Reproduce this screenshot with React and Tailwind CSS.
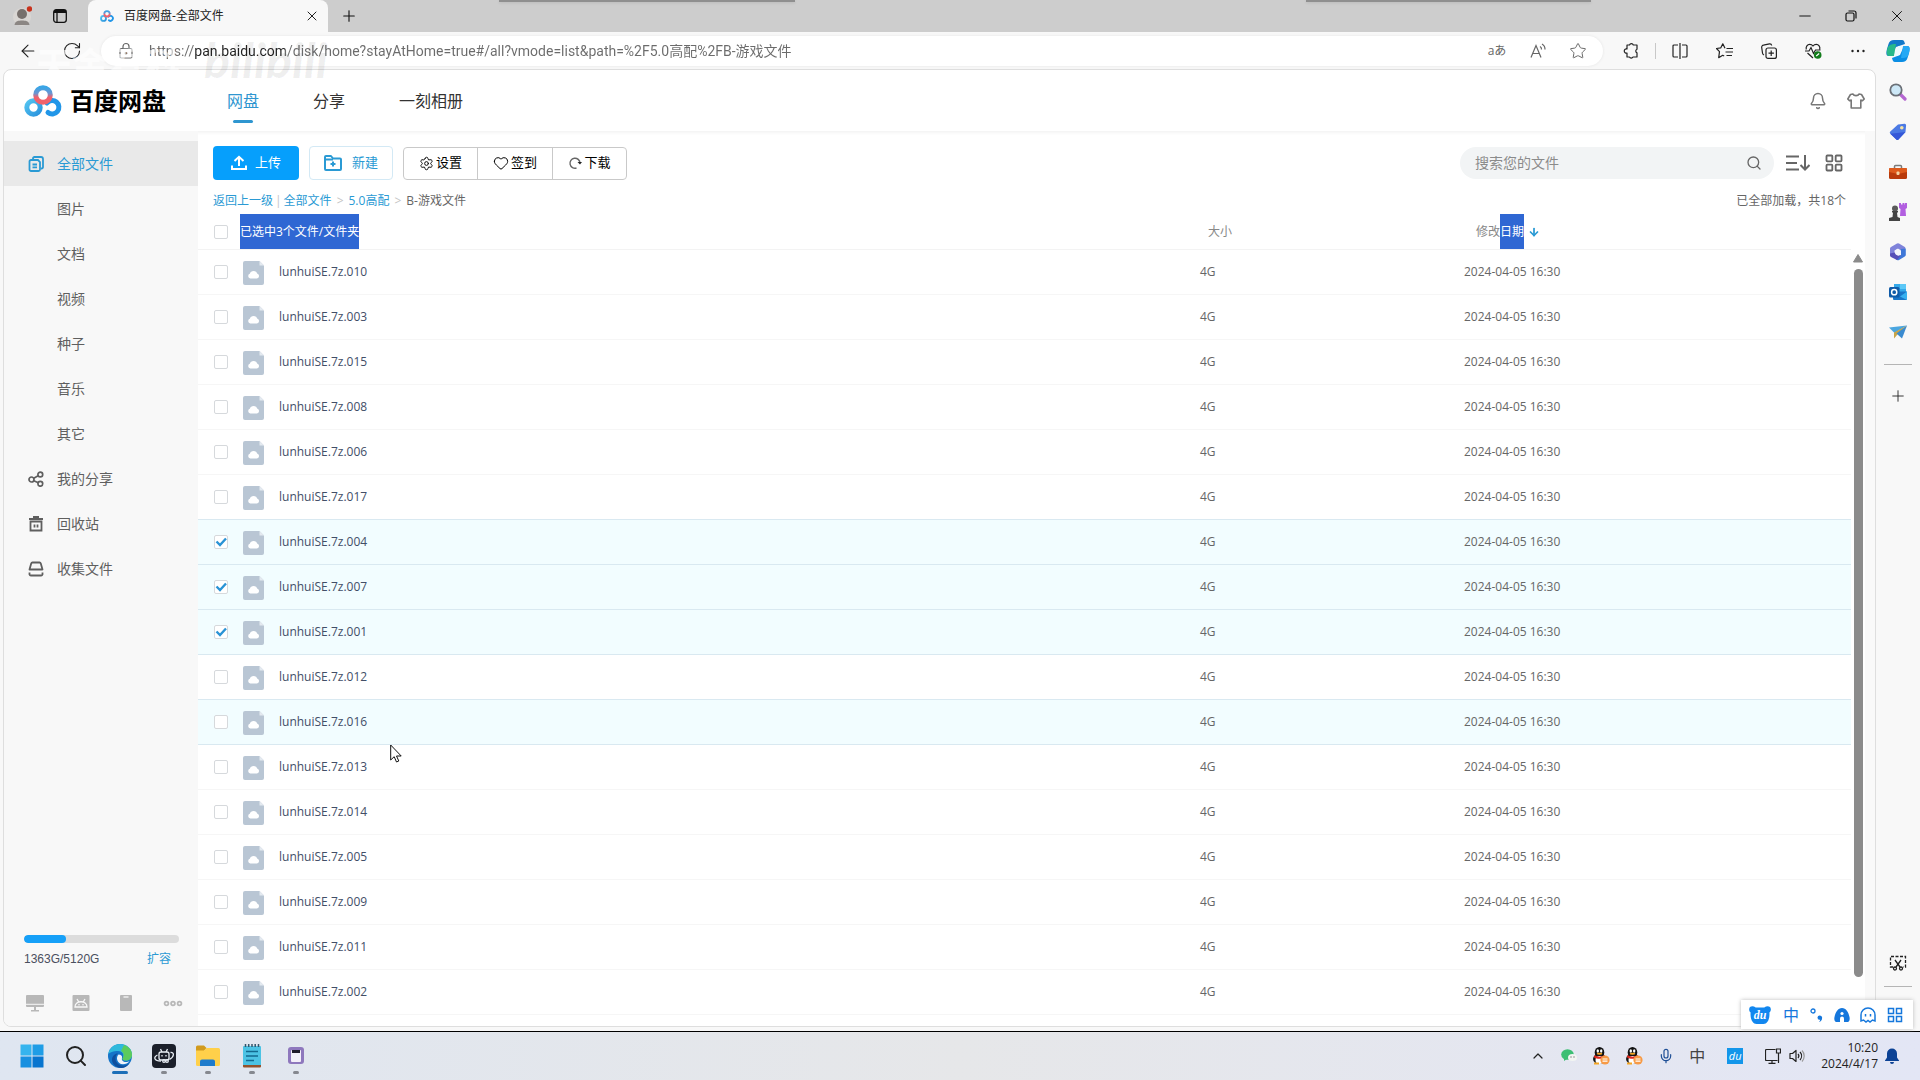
import {
  ArrowLeft,
  ArrowDown,
  BellIcon,
  ChevronUp,
  Heart,
  LayoutGrid,
  Mic,
  Minus,
  Plus,
  RotateCw,
  Search,
  Settings,
  Star,
  X,
} from "lucide-react";

const files = [
  { name: "lunhuiSE.7z.010" },
  { name: "lunhuiSE.7z.003" },
  { name: "lunhuiSE.7z.015" },
  { name: "lunhuiSE.7z.008" },
  { name: "lunhuiSE.7z.006" },
  { name: "lunhuiSE.7z.017" },
  { name: "lunhuiSE.7z.004", checked: true },
  { name: "lunhuiSE.7z.007", checked: true },
  { name: "lunhuiSE.7z.001", checked: true },
  { name: "lunhuiSE.7z.012" },
  { name: "lunhuiSE.7z.016", hovered: true },
  { name: "lunhuiSE.7z.013" },
  { name: "lunhuiSE.7z.014" },
  { name: "lunhuiSE.7z.005" },
  { name: "lunhuiSE.7z.009" },
  { name: "lunhuiSE.7z.011" },
  { name: "lunhuiSE.7z.002" },
];

const isActive = (file) => Boolean(file && (file.checked || file.hovered));

/* ---------- Icons ---------- */

function CloudLogo({ className }) {
  return (
    <svg className={className} viewBox="0 0 38 32" fill="none">
      <defs>
        <linearGradient id="ring" x1="0" y1="0" x2="0" y2="1">
          <stop offset="0" stopColor="#3aa5e6" />
          <stop offset="0.4" stopColor="#6f93cf" />
          <stop offset="0.65" stopColor="#f0616c" />
        </linearGradient>
        <linearGradient id="left" x1="0" y1="0" x2="1" y2="1">
          <stop offset="0" stopColor="#52c3f0" />
          <stop offset="1" stopColor="#2a93dd" />
        </linearGradient>
      </defs>
      <circle cx="9.5" cy="22.5" r="6.7" stroke="url(#left)" strokeWidth="5" />
      <path d="M23 18a6.700 6.700 0 1 1 1 9.500" stroke="#2196e8" strokeWidth="5" strokeLinecap="round" />
      <circle cx="19" cy="10" r="7.300" stroke="url(#ring)" strokeWidth="5" />
    </svg>
  );
}

function FilesIcon() {
  return (
    <svg className="size-4" viewBox="0 0 16 16" fill="none" stroke="currentColor" strokeWidth="1.800">
      <path d="M5 3V2.500A1.500 1.500 0 0 1 6.500 1H13a2 2 0 0 1 2 2v8a1.500 1.500 0 0 1-1.500 1.500H13" />
      <path d="M3 4h7l2 2v7.500a1.500 1.500 0 0 1-1.500 1.500H3a1.500 1.500 0 0 1-1.500-1.500v-8A1.500 1.500 0 0 1 3 4Z" />
      <path d="M4.500 8.500H9M4.500 11.300H9" />
    </svg>
  );
}

function ShareIcon() {
  return (
    <svg className="size-4" viewBox="0 0 16 16" fill="none" stroke="currentColor" strokeWidth="1.700">
      <circle cx="3.500" cy="8.500" r="2.500" />
      <circle cx="12.300" cy="3.500" r="2.400" />
      <circle cx="12.300" cy="12.800" r="2.400" />
      <path d="M5.700 7.200 10.200 4.700M5.800 9.700l4.500 2.100" />
    </svg>
  );
}

function TrashIcon() {
  return (
    <svg className="size-4" viewBox="0 0 16 16" fill="none" stroke="currentColor" strokeWidth="1.800">
      <path d="M1 3h14M5 1h6M2.500 5.500h11v9h-11zM6.500 8.500v3M9.500 8.500v3" />
    </svg>
  );
}

function CollectIcon() {
  return (
    <svg className="size-4" viewBox="0 0 16 16" fill="none" stroke="currentColor" strokeWidth="1.800" strokeLinejoin="round">
      <path d="M1.500 8.500 3.200 2.500a1.500 1.500 0 0 1 1.300-1h7a1.500 1.500 0 0 1 1.300 1l1.700 6zM1.500 11.500v2a1.500 1.500 0 0 0 1.500 1h10a1.500 1.500 0 0 0 1.500-1v-2" />
    </svg>
  );
}

function UploadIcon() {
  return (
    <svg className="size-4" viewBox="0 0 16 16" fill="none" stroke="currentColor" strokeWidth="2">
      <path d="M8 11V2.500M3.500 6 8 1.800 12.500 6M1 10.500V14h14v-3.500" />
    </svg>
  );
}

function NewFolderIcon() {
  return (
    <svg className="h-4 w-[18px]" viewBox="0 0 18 16" fill="none" stroke="currentColor" strokeWidth="2" strokeLinejoin="round">
      <path d="M1 14V2a1 1 0 0 1 1-1h5l2 2.500h7a1 1 0 0 1 1 1V14a1 1 0 0 1-1 1H2a1 1 0 0 1-1-1Z" />
      <path d="M1 4.500h8M9 6.500v5M6.500 9h5" />
    </svg>
  );
}

function ShirtIcon() {
  return (
    <svg className="size-[18px]" viewBox="0 0 18 18" fill="none" stroke="currentColor" strokeWidth="1.600" strokeLinejoin="round">
      <path d="M6 2c.8 2.200 5.200 2.200 6 0l2.500.5L17.200 7l-1.700 1.800-1.700-.8V16H4.200V8l-1.700.8L.8 7l2.700-4.500Z" />
    </svg>
  );
}

function FileIcon() {
  return (
    <svg className="h-6 w-[21px] shrink-0" viewBox="0 0 21 24">
      <path d="M2 0h14.500L21 4.500V22a2 2 0 0 1-2 2H2a2 2 0 0 1-2-2V2a2 2 0 0 1 2-2Z" fill="#b9c6d4" />
      <path d="M16.500 0 21 4.500h-4.500Z" fill="#e4eaf0" />
      <path d="M7.300 17.500a2.500 2.500 0 0 1-.5-4.800 4 4 0 0 1 7.600 0 2.500 2.500 0 0 1-.4 4.800Z" fill="#fff" />
    </svg>
  );
}

function SortIcon() {
  return (
    <svg className="h-4 w-6" viewBox="0 0 24 16" fill="none" stroke="currentColor" strokeWidth="2">
      <path d="M0 1.500h13M0 8h11M0 14.500h13M19 0v14M14.500 10 19 14.500 23.500 10" />
    </svg>
  );
}

function PuzzleIcon() {
  return (
    <svg className="size-4" viewBox="0 0 16 16" fill="none" stroke="currentColor" strokeWidth="1.200" strokeLinejoin="round">
      <path d="M4 2h2.500a2 2 0 0 1 3.800 0H14v4.200a2 2 0 0 0 0 3.700V14h-4a2 2 0 0 1-3.600 0H4v-4a2.100 2.100 0 1 1 0-4Z" />
    </svg>
  );
}

function SplitIcon() {
  return (
    <svg className="size-4" viewBox="0 0 16 16" fill="none" stroke="currentColor" strokeWidth="1.200">
      <path d="M6 2H2a1 1 0 0 0-1 1v10a1 1 0 0 0 1 1h4M10 2h4a1 1 0 0 1 1 1v10a1 1 0 0 1-1 1h-4M8 0v16" />
    </svg>
  );
}

function FavoritesIcon() {
  return (
    <svg className="h-4 w-[17px]" viewBox="0 0 17 16" fill="none" stroke="currentColor" strokeWidth="1.200" strokeLinejoin="round">
      <path d="m9 5.200-2.200-4.400L4.700 4.900.5 5.500l3 3.200-.8 6 4-2.400 1.500.7M10.500 5.500H17M9.500 9H17M10.500 12.500H16" />
    </svg>
  );
}

function CollectionsIcon() {
  return (
    <svg className="size-4" viewBox="0 0 16 16" fill="none" stroke="currentColor" strokeWidth="1.200">
      <rect x="5" y="5" width="10.400" height="10.400" rx="2" />
      <path d="M10.200 7.500v5.400M7.500 10.200h5.400M3 12A2.500 2.500 0 0 1 1.500 10L.7 4.500a2 2 0 0 1 1.700-2.300L8.500.8a2 2 0 0 1 2.200 1.700" />
    </svg>
  );
}

function HealthIcon() {
  return (
    <svg className="h-4 w-[17px]" viewBox="0 0 17 16" fill="none" stroke="currentColor" strokeWidth="1.200">
      <path d="M1.300 6.500C.5 3.500 2.500 1.300 4.700 1.300c1.500 0 2.600.7 3.300 1.700.7-1 1.800-1.700 3.300-1.700 2.200 0 4.200 2.200 3.400 5.200M0 8h4l2-3.500 2.500 6L10.500 7H15.500M2.500 10 8 15" />
      <circle cx="12.700" cy="12" r="3.800" fill="#127c1b" stroke="none" />
      <path d="m11.200 13 3-2.500" stroke="#fff" />
    </svg>
  );
}

function CopilotIcon() {
  return (
    <svg className="size-6" viewBox="0 0 24 24">
      <path d="M8 1h8c2 0 2.500 2 3 4l-9 3-5 9H2.500C0 17 0 14 1 10l1.500-5C3.300 2.500 5 1 8 1Z" fill="#1279c9" />
      <path d="M2 8c2-3 5-3 8-3L8 17H3C0 17 .5 11 2 8Z" fill="#27b88a" />
      <path d="M16 23H9c-2 0-2.500-2-3-4l8-3 4-9h3.500C24 7 24 10 23 14l-1.500 5c-.8 2.500-2.500 4-5.500 4Z" fill="#0b8ee4" />
      <path d="M17 7h4c3 0 3 3 2 7l-1 3c-2 2-4 2-7 2Z" fill="#25a9f5" />
      <path d="M12.500 7h4L12 17H8Z" fill="#e9fbff" />
    </svg>
  );
}

function SideSearchIcon() {
  return (
    <svg className="size-[18px]" viewBox="0 0 18 18">
      <path d="m11 11 5 5" stroke="#b466d0" strokeWidth="3.200" strokeLinecap="round" />
      <circle cx="7" cy="7" r="5.700" fill="#cde8f7" stroke="#6b7077" strokeWidth="1.800" />
    </svg>
  );
}

function TagIcon() {
  return (
    <svg className="size-[18px]" viewBox="0 0 18 18">
      <path d="M9 1.500 15.500.8a1.500 1.500 0 0 1 1.600 1.500L16.500 9l-7 7.500a1.500 1.500 0 0 1-2.200 0L1.300 10.700a1.500 1.500 0 0 1 0-2.200Z" fill="#4c7ae4" />
      <path d="m1.300 10.700 6 5.800a1.500 1.500 0 0 0 2.200 0L16.500 9Z" fill="#3558d8" />
      <circle cx="12.800" cy="4.800" r="1.800" fill="#f6e3a4" />
    </svg>
  );
}

function BriefcaseIcon() {
  return (
    <svg className="size-[18px]" viewBox="0 0 18 18">
      <path d="M5.500 5V3.500a1 1 0 0 1 1-1h5a1 1 0 0 1 1 1V5" fill="none" stroke="#7b7b7b" strokeWidth="1.500" />
      <rect x="0" y="5" width="18" height="11" rx="1.500" fill="#b93a0b" />
      <path d="M1 5h16a1 1 0 0 1 1 1v3L9 11 0 9V6a1 1 0 0 1 1-1Z" fill="#dd5a1c" />
      <rect x="7.500" y="8.500" width="3" height="3.500" rx="1" fill="#f3d3a3" />
    </svg>
  );
}

function ChessIcon() {
  return (
    <svg className="size-[18px]" viewBox="0 0 18 18">
      <path d="M10 0h2v1.500h1.500V0h2v1.500H16V0h2v5l-1.500 1 .5 7h-6l.5-7L10 5Z" fill="#b25fe0" />
      <circle cx="6" cy="5.500" r="3" fill="#5a5a5a" />
      <path d="M3 8h6v1.500H8L8.500 14 11 15v3H0v-3l3.500-1L4 9.500H3Z" fill="#444" />
    </svg>
  );
}

function OfficeIcon() {
  return (
    <svg className="size-[18px]" viewBox="0 0 18 18">
      <path d="M8 .5a2 2 0 0 1 2 0l5 3a2 2 0 0 1 1.500 2L12 8 9 5.500 5.500 7.500v6L2 12.500a2 2 0 0 1-1-2V6a2 2 0 0 1 1-2Z" fill="#7f83da" />
      <path d="M16.800 5.500v6a2 2 0 0 1-1 2L10 17a2 2 0 0 1-2 0l-2-1.500 6-3.500V6Z" fill="#3f78d8" />
      <path d="M1 10.500 5.500 9.500l3.500 3.300 3-.8-4 5L2 14a2 2 0 0 1-1-2Z" fill="#5650b8" />
      <circle cx="9" cy="9.300" r="3" fill="#f3f6fc" />
    </svg>
  );
}

function OutlookIcon() {
  return (
    <svg className="size-[18px]" viewBox="0 0 18 18">
      <rect x="5" y="1" width="12" height="10" fill="#35a9ea" />
      <rect x="11" y="1" width="6" height="5" fill="#5cc8f7" />
      <path d="M4 8.500h14V16a1 1 0 0 1-1 1H5a1 1 0 0 1-1-1Z" fill="#1a76c8" />
      <path d="m18 8.500-7 5 7 3.500Z" fill="#38b1f0" />
      <rect x="0" y="4" width="10.500" height="10.500" rx="1.500" fill="#0f5ba8" />
      <circle cx="5.200" cy="9.200" r="2.600" fill="none" stroke="#fff" strokeWidth="1.500" />
    </svg>
  );
}

function SendIcon() {
  return (
    <svg className="size-[18px]" viewBox="0 0 18 18">
      <path d="M0 4.500 18 2.500 5.500 10Z" fill="#4aa6e0" />
      <path d="M18 2.500 5 9.500v6l3-3.500Z" fill="#c9a547" />
      <path d="M18 2.500 7.500 10.500l5.500 5Z" fill="#3a8bd0" />
    </svg>
  );
}

function ScreenshotIcon() {
  return (
    <svg className="size-[18px]" viewBox="0 0 18 18" fill="none" stroke="#222" strokeWidth="1.300">
      <path d="M4 13H1.500V2.500h15V13H14" strokeDasharray="3 1.500" />
      <path d="m6 6 5 7M12 6l-5 7" />
      <circle cx="6" cy="14.500" r="1.500" />
      <circle cx="12" cy="14.500" r="1.500" />
    </svg>
  );
}

function EdgeIcon() {
  return (
    <svg className="size-6" viewBox="0 0 24 24">
      <circle cx="12" cy="12" r="12" fill="#1574c8" />
      <path d="M.3 10C1.500 4 6 0 12 0c7 0 12 5 12 10.500 0 4-3 6-6 6-3.500 0-4-1.500-3-3C16 11 15 7 10 7 5.500 7 1.500 8.500.3 10Z" fill="#2fb9dc" />
      <path d="M16 1c5 1.600 8 5.500 8 9.500 0 4-3 6-6 6-3.500 0-4-1.500-3-3 1.500-2.500.5-5-2-6.500Z" fill="#5ccb5c" />
      <path d="M10 9.500c-3 1.500-4 8 1 11 3 1.800 7 1.500 10.500-1.500C18 25.500 9 25.500 5 19.500 2 14 6 9.500 10 9.500Z" fill="#0e4f9e" />
      <path d="M10.500 10.500c2.500 0 4 1.500 3.500 3.500-.7 2 1 4 4 4 1.500 0 2.500-.3 3.500-.8-1.500 2-4 3-6.500 3-6 0-7.500-7-4.500-9.700Z" fill="#eef3fa" />
    </svg>
  );
}

function RobotAppIcon() {
  return (
    <svg className="size-6" viewBox="0 0 24 24" fill="none" stroke="#e8eef5" strokeWidth="1.300">
      <rect width="24" height="24" rx="4" fill="#1b202b" stroke="none" />
      <rect x="7" y="8" width="10" height="8" rx="2" />
      <path d="m8.500 5 1.500 3M15.500 5 14 8M10 11v1.500M14 11v1.500" />
      <path d="M5.500 11C1 13 2 17 9 17M18.500 8.500c4-.5 4 4-1 7" />
      <circle cx="12" cy="17" r="1.300" />
      <circle cx="15" cy="17" r="1.300" />
    </svg>
  );
}

function FolderAppIcon() {
  return (
    <svg className="size-6" viewBox="0 0 24 24">
      <path d="M0 3a1.500 1.500 0 0 1 1.500-1.500H8L10.500 4 8 7H0Z" fill="#d19a1d" />
      <path d="M0 6.500h8L10.500 4H22.500A1.500 1.500 0 0 1 24 5.500v15a1.500 1.500 0 0 1-1.500 1.500h-21A1.500 1.500 0 0 1 0 20.500Z" fill="#ffd04a" />
      <path d="M4 22v-4.500a2 2 0 0 1 2-2h11a2 2 0 0 1 2 2V22Z" fill="#1d7bcc" />
    </svg>
  );
}

function NotepadIcon() {
  return (
    <svg className="size-6" viewBox="0 0 24 24">
      <rect x="3" y="2" width="18" height="20" rx="1" fill="#4cc3e4" />
      <path d="M3 21h18v1.500a1 1 0 0 1-1 1H4a1 1 0 0 1-1-1Z" fill="#94522c" />
      <path d="M5.500 0v3M8.700 0v3M12 0v3M15.200 0v3M18.500 0v3" stroke="#33566b" strokeWidth="1.500" />
      <path d="M6 7.500h12M6 12h12M6 16.500h8" stroke="#136a8f" strokeWidth="1.600" />
    </svg>
  );
}

function DeviceAppIcon() {
  return (
    <svg className="size-6" viewBox="0 0 24 24">
      <rect x="4" y="3" width="16" height="17" rx="3" fill="#8e78bd" />
      <rect x="7" y="6" width="10" height="12" rx="1" fill="#f3eff9" />
      <rect x="8" y="6" width="8" height="3" fill="#201b2b" />
    </svg>
  );
}

function WindowsIcon() {
  return (
    <svg className="size-6" viewBox="0 0 24 24">
      <path d="M0.500 0.500h11v11h-11z" fill="#35b4ee" />
      <path d="M12.500 0.500h11v11h-11z" fill="#1f9de6" />
      <path d="M0.500 12.500h11v11h-11z" fill="#1890e0" />
      <path d="M12.500 12.500h11v11h-11z" fill="#0875cf" />
    </svg>
  );
}

function QQIcon() {
  return (
    <svg className="size-[18px]" viewBox="0 0 18 18">
      <ellipse cx="7.500" cy="5.500" rx="4.800" ry="5.500" fill="#111" />
      <ellipse cx="7.500" cy="12" rx="6.500" ry="5" fill="#181818" />
      <ellipse cx="7.500" cy="13" rx="4" ry="4" fill="#fff" />
      <path d="M2.500 8c3 2.200 7 2.200 10 0l.5 2.500c-3 1.800-8 1.800-11 0Z" fill="#e0281e" />
      <ellipse cx="5.800" cy="4" rx="1.200" ry="1.700" fill="#fff" />
      <ellipse cx="9.200" cy="4" rx="1.200" ry="1.700" fill="#fff" />
      <ellipse cx="7.500" cy="6.800" rx="2.800" ry="1" fill="#f5a623" />
      <path d="M2 16.500h5" stroke="#f5a623" strokeWidth="2" />
      <circle cx="13" cy="13" r="4.600" fill="#f79a45" />
      <path d="M10.500 12h5M10.500 14.200h5" stroke="#fff" strokeWidth="1.200" />
    </svg>
  );
}

function WechatIcon() {
  return (
    <svg className="size-4" viewBox="0 0 16 16">
      <ellipse cx="6.500" cy="6.500" rx="6.300" ry="5.300" fill="#3cbf73" />
      <path d="M3 10v3l3-2Z" fill="#3cbf73" />
      <ellipse cx="11.500" cy="9.500" rx="4.500" ry="3.600" fill="#f2f5f2" />
      <circle cx="10" cy="9" r=".7" fill="#777" />
      <circle cx="13" cy="9" r=".7" fill="#777" />
    </svg>
  );
}

function NetworkIcon() {
  return (
    <svg className="size-4" viewBox="0 0 16 16" fill="none" stroke="#222" strokeWidth="1.200">
      <path d="M10.500 1.500H1.500a1 1 0 0 0-1 1v9a1 1 0 0 0 1 1h11M7 12.500V15M3.500 15.300h7M11.500 1h4v4h-4zM13.500 5v10" />
    </svg>
  );
}

function SpeakerIcon() {
  return (
    <svg className="size-4" viewBox="0 0 16 16" fill="none" stroke="#222" strokeWidth="1.200" strokeLinejoin="round">
      <path d="M1 5.500h2.500L7 2.500v11l-3.500-3H1ZM9 6a3 3 0 0 1 0 4M11 4a6 6 0 0 1 0 8" />
      <path d="M13 2.500a8 8 0 0 1 0 11" stroke="#999" />
    </svg>
  );
}

/* ---------- Browser chrome ---------- */

function TitleBar() {
  return (
    <div className="relative flex h-8 items-center bg-[#cdcdcd]">
      <div className="absolute top-0 left-[26%] h-0.5 w-[296px] bg-[#8f8f8f] shadow-sm" />
      <div className="absolute top-0 left-[68%] h-0.5 w-[285px] bg-[#8f8f8f] shadow-sm" />
      <button className="ml-3 size-5" aria-label="Profile">
        <svg viewBox="0 0 20 20" className="size-5">
          <circle cx="10" cy="11" r="9" fill="#d9d6d3" />
          <circle cx="10" cy="8" r="5" fill="#77706c" />
          <path d="M2.500 19c.5-4 4-4.500 7.500-4.500s7 .5 7.500 4.500Z" fill="#8b8683" />
          <circle cx="17.500" cy="3" r="2.700" fill="#c8321c" />
        </svg>
      </button>
      <button className="ml-5 size-4" aria-label="Tab actions">
        <svg viewBox="0 0 16 16" className="size-4" fill="none" stroke="#111" strokeWidth="1.300">
          <rect x="1.700" y="1.700" width="12.600" height="12.600" rx="2.500" />
          <path d="M2 3.500h12" strokeWidth="3" />
          <path d="M5 4v10" />
        </svg>
      </button>
      <div className="ml-5 flex h-8 w-60 items-center rounded-t-lg bg-[#f8f8f8] pr-2 pl-3">
        <CloudLogo className="h-3 w-[14px]" />
        <span className="ml-2.5 flex-1 text-xs text-[#222]">百度网盘-全部文件</span>
        <button aria-label="Close tab">
          <X className="size-4 text-[#222]" strokeWidth={1.5} />
        </button>
      </div>
      <button className="ml-3" aria-label="New tab">
        <Plus className="size-[18px] text-[#111]" strokeWidth={1.5} />
      </button>
      <div className="ml-auto flex items-center gap-7 pr-3.5 text-[#111]">
        <button aria-label="Minimize">
          <Minus className="size-[18px]" strokeWidth={1.3} />
        </button>
        <button aria-label="Restore">
          <svg viewBox="0 0 18 18" className="size-[18px]" fill="none" stroke="currentColor" strokeWidth="1.200">
            <rect x="4" y="6" width="8" height="8" rx="1.500" />
            <path d="M6.500 4h5.500a2 2 0 0 1 2 2v5.500" />
          </svg>
        </button>
        <button aria-label="Close">
          <X className="size-[18px]" strokeWidth={1.3} />
        </button>
      </div>
    </div>
  );
}

function AddressBar() {
  return (
    <div className="flex h-[37px] items-center bg-[#f8f8f8] pr-2.5 pl-[18px] text-[#222]">
      <button aria-label="Back">
        <ArrowLeft className="size-5" strokeWidth={1.3} />
      </button>
      <button className="ml-6" aria-label="Reload">
        <RotateCw className="size-5" strokeWidth={1.3} />
      </button>
      <div className="ml-[19px] flex h-[30px] flex-1 items-center rounded-full bg-white pr-4 pl-4 text-[#666] shadow-[0_0_3px_#e4e4e4]">
        <svg viewBox="0 0 18 18" className="size-[18px] shrink-0" fill="none" stroke="currentColor" strokeWidth="1.200">
          <rect x="3" y="6.500" width="12" height="9.500" rx="1.500" />
          <path d="M6 6.500V4.500a3 3 0 0 1 6 0v2" />
          <circle cx="9" cy="11.300" r=".8" fill="currentColor" />
        </svg>
        {/* the host part of the address is darker than the rest */}
        <input
          type="text"
          aria-label="Address"
          defaultValue="https://pan.baidu.com/disk/home?stayAtHome=true#/all?vmode=list&path=%2F5.0高配%2FB-游戏文件"
          className="ml-3.5 min-w-0 flex-1 bg-[linear-gradient(90deg,#6b6b6b_46px,#222_46px,#222_136px,#6b6b6b_136px)] bg-clip-text font-[Roboto,'Noto_Sans_CJK_SC',sans-serif] text-sm text-transparent outline-none"
        />
        <div className="flex items-center gap-[22px]">
          <button className="w-5 text-xs" aria-label="Translate">aあ</button>
          <button className="size-[18px]" aria-label="Read aloud">
            <svg viewBox="0 0 18 18" fill="none" stroke="currentColor" strokeWidth="1.200">
              <path d="m2 15.500 5-12 5 12M4 11.500h6M11 4.500a3 3 0 0 1 1.500 3M13 2a6 6 0 0 1 3 5.500" />
            </svg>
          </button>
          <button aria-label="Add to favorites">
            <Star className="size-[18px]" strokeWidth={1.3} />
          </button>
        </div>
      </div>
      <div className="ml-5 flex items-center">
        <button aria-label="Extensions"><PuzzleIcon /></button>
        <div className="mx-4 h-4 w-px bg-[#c8c8c8]" />
        <div className="flex items-center gap-7">
          <button aria-label="Split screen"><SplitIcon /></button>
          <button aria-label="Favorites"><FavoritesIcon /></button>
          <button aria-label="Collections"><CollectionsIcon /></button>
          <button aria-label="Browser essentials"><HealthIcon /></button>
          <button aria-label="More">
            <svg viewBox="0 0 16 16" className="size-4" fill="currentColor">
              <circle cx="2.500" cy="8" r="1.200" />
              <circle cx="8" cy="8" r="1.200" />
              <circle cx="13.500" cy="8" r="1.200" />
            </svg>
          </button>
        </div>
        <button className="ml-5" aria-label="Copilot"><CopilotIcon /></button>
      </div>
    </div>
  );
}

function EdgeSidebar() {
  return (
    <aside className="flex w-11 shrink-0 flex-col items-center pt-3.5 pb-3.5">
      <div className="flex flex-col gap-[22px]">
        <button aria-label="Search"><SideSearchIcon /></button>
        <button aria-label="Shopping"><TagIcon /></button>
        <button aria-label="Tools"><BriefcaseIcon /></button>
        <button aria-label="Games"><ChessIcon /></button>
        <button aria-label="Microsoft 365"><OfficeIcon /></button>
        <button aria-label="Outlook"><OutlookIcon /></button>
        <button aria-label="Drop"><SendIcon /></button>
      </div>
      <div className="mt-[23px] h-px w-7 bg-[#b5b5b5]" />
      <button className="mt-[22px]" aria-label="Customize">
        <Plus className="size-[18px] text-[#222]" strokeWidth={1.2} />
      </button>
      <button className="mt-auto" aria-label="Screenshot"><ScreenshotIcon /></button>
      <div className="mt-3.5 mb-[30px] h-px w-7 bg-[#b5b5b5]" />
    </aside>
  );
}

/* ---------- Netdisk page ---------- */

function PageHeader() {
  return (
    <header className="flex h-[61px] items-center pr-2.5 pl-5 shadow-[0_1px_4px_#eeeeee]">
      <CloudLogo className="h-8 w-[38px]" />
      <span className="ml-2 text-2xl font-bold text-black">百度网盘</span>
      <nav className="ml-[61px] flex items-center gap-[54px] text-base text-[#333]">
        <a href="#disk" className="relative text-[#2f96d0]">
          网盘
          <span className="absolute -bottom-2.5 left-1.5 h-[3px] w-5 rounded-full bg-[#2f96d0]" />
        </a>
        <a href="#share">分享</a>
        <a href="#album">一刻相册</a>
      </nav>
      <div className="ml-auto flex items-center gap-5 text-[#777]">
        <button aria-label="通知"><BellIcon className="size-[18px]" /></button>
        <button aria-label="皮肤"><ShirtIcon /></button>
      </div>
    </header>
  );
}

function NavItem({ icon, label, active }) {
  return (
    <a
      href="#nav"
      className={`flex h-[45px] items-center pl-6 ${
        active ? "bg-[#e9e9e9] text-[#2a9ad4]" : "text-[#5f5f5f]"
      }`}
    >
      <span className="w-[29px]">{icon}</span>
      <span className="text-sm">{label}</span>
    </a>
  );
}

function PageSidebar() {
  return (
    <aside className="flex w-[194px] shrink-0 flex-col bg-[#f8f8f8] pt-2.5">
      <nav>
        <NavItem icon={<FilesIcon />} label="全部文件" active />
        <NavItem label="图片" />
        <NavItem label="文档" />
        <NavItem label="视频" />
        <NavItem label="种子" />
        <NavItem label="音乐" />
        <NavItem label="其它" />
        <NavItem icon={<ShareIcon />} label="我的分享" />
        <NavItem icon={<TrashIcon />} label="回收站" />
        <NavItem icon={<CollectIcon />} label="收集文件" />
      </nav>
      <div className="mt-auto pr-[19px] pb-3.5 pl-5">
        <div className="h-2 overflow-hidden rounded-full bg-[#dcdcdc]">
          <div className="h-2 w-[27%] rounded-full bg-[#16a0f8]" />
        </div>
        <div className="mt-2 flex h-4 items-center justify-between pr-2 text-xs">
          <span className="font-['Liberation_Sans','Noto_Sans_CJK_SC',sans-serif] text-[#4a4f5e]">1363G/5120G</span>
          <a href="#expand" className="text-[#2a9ad4]">扩容</a>
        </div>
        <div className="mt-[27px] flex items-center justify-between pl-0.5 text-[#b8b8b8]">
          <svg viewBox="0 0 18 18" className="size-[18px]" fill="currentColor">
            <path d="M1 1h16a1 1 0 0 1 1 1v10a1 1 0 0 1-1 1H1a1 1 0 0 1-1-1V2a1 1 0 0 1 1-1Zm7 12h2v3h3v1.500H5V16h3Z" />
            <path d="M0 10.300h18" stroke="#f8f8f8" strokeWidth="1" />
          </svg>
          <svg viewBox="0 0 18 18" className="size-[18px]">
            <rect x="0.500" y="1" width="17" height="16" rx="1" fill="currentColor" />
            <path d="M3 13c0-7 12-7 12 0ZM5 5l1.500 2.500M13 5l-1.500 2.500" fill="none" stroke="#f8f8f8" strokeWidth="1.300" />
            <circle cx="7" cy="10.800" r=".8" fill="#f8f8f8" />
            <circle cx="11" cy="10.800" r=".8" fill="#f8f8f8" />
          </svg>
          <svg viewBox="0 0 18 18" className="size-[18px]">
            <rect x="3" y="1" width="12" height="16" rx="1" fill="currentColor" />
            <path d="M6.500 3h5" stroke="#f8f8f8" strokeWidth="1.300" />
          </svg>
          <svg viewBox="0 0 20 18" className="-mr-1 h-[18px] w-5" fill="none" stroke="currentColor" strokeWidth="1.800">
            <circle cx="3.500" cy="9.500" r="1.900" />
            <circle cx="10" cy="9.500" r="1.900" />
            <circle cx="16.500" cy="9.500" r="1.900" />
          </svg>
        </div>
      </div>
    </aside>
  );
}

function Toolbar() {
  return (
    <div className="flex h-[34px] items-center pr-[7px] pl-[15px]">
      <button className="flex h-[34px] w-[86px] items-center justify-center gap-2 rounded bg-[#069ffc] text-[13px] text-white">
        <UploadIcon />
        上传
      </button>
      <button className="ml-2.5 flex h-[34px] w-[84px] items-center justify-center gap-2.5 rounded border border-[#d3e9f5] text-[13px] text-[#2a9ad4]">
        <NewFolderIcon />
        新建
      </button>
      <div className="ml-2.5 flex h-[33px] divide-x divide-[#c9c9c9] rounded border border-[#c9c9c9] text-[13px] text-black">
        <button className="flex w-[74px] items-center justify-center gap-0.5">
          <Settings className="size-[15px]" strokeWidth={1.5} />
          设置
        </button>
        <button className="flex w-[75px] items-center justify-center gap-0.5">
          <Heart className="size-4" strokeWidth={1.5} />
          签到
        </button>
        <button className="flex w-[73px] items-center justify-center gap-0.5">
          <svg viewBox="0 0 14 14" className="size-3.5" fill="none" stroke="#666" strokeWidth="1.400">
            <path d="M8.500 12A5 5 0 1 1 12 7" />
            <path d="m9.500 6 2.500 2.500L14 6Z" fill="#222" stroke="none" />
          </svg>
          下载
        </button>
      </div>
      <div className="ml-auto flex h-8 w-[314px] items-center rounded-full bg-[#f2f4f5] pr-3 pl-[15px]">
        <input
          type="text"
          aria-label="搜索您的文件"
          placeholder="搜索您的文件"
          className="min-w-0 flex-1 bg-transparent text-sm outline-none placeholder:text-[#8b8b8b]"
        />
        <button aria-label="搜索">
          <Search className="size-4 text-[#666]" />
        </button>
      </div>
      <button className="ml-3 text-[#666]" aria-label="排序"><SortIcon /></button>
      <button className="ml-3.5 text-[#666]" aria-label="网格视图">
        <LayoutGrid className="size-5" strokeWidth={2.2} />
      </button>
    </div>
  );
}

function Breadcrumb() {
  return (
    <div className="mt-[11px] flex h-5 items-center justify-between pr-[5px] pl-[15px] text-xs text-[#666]">
      <div className="flex items-center">
        <a href="#up" className="text-[#2a9ad4]">返回上一级</a>
        <span className="mx-0.5 text-[#c4c4c4]">|</span>
        <a href="#all" className="text-[#2a9ad4]">全部文件</a>
        <span className="mx-[5px] text-[#c4c4c4]">&gt;</span>
        <a href="#high" className="text-[#2a9ad4]">5.0高配</a>
        <span className="mx-[5px] text-[#c4c4c4]">&gt;</span>
        <span>B-游戏文件</span>
      </div>
      <span>已全部加载，共18个</span>
    </div>
  );
}

function CheckBox({ label, checked }) {
  return (
    <span className="relative flex size-3.5 shrink-0">
      <input
        type="checkbox"
        aria-label={label}
        defaultChecked={checked}
        className="peer size-3.5 appearance-none rounded-[2px] border border-[#d6d9dc] bg-white"
      />
      <svg
        viewBox="0 0 14 14"
        className="pointer-events-none absolute inset-0 hidden size-3.5 peer-checked:block"
        fill="none"
        stroke="#2a93d5"
        strokeWidth="2.400"
      >
        <path d="m2.500 6.500 3.500 3.500 6-6.500" />
      </svg>
    </span>
  );
}

function FileTable() {
  return (
    <table className="mt-[3px] w-full table-fixed text-left text-xs text-[#666]">
      <colgroup>
        <col />
        <col className="w-[264px]" />
        <col className="w-[387px]" />
      </colgroup>
      <thead>
        <tr className="border-b border-[#f3f3f3] text-[#888]">
          <th className="p-0 font-normal">
            <div className="flex items-center pl-4">
              <CheckBox label="全选" />
              <span className="ml-3 bg-[#2f67d3] leading-[35px] text-white">已选中3个文件/文件夹</span>
            </div>
          </th>
          <th className="p-0 pl-2 font-normal">大小</th>
          <th className="p-0 pl-3 font-normal">
            <div className="flex items-center">
              修改<span className="bg-[#2f67d3] leading-[35px] text-white">日期</span>
              <ArrowDown className="ml-1 size-3 text-[#2a9ad4]" strokeWidth={3.5} />
            </div>
          </th>
        </tr>
      </thead>
      <tbody>
        {files.map((file, i) => (
          <tr
            key={file.name}
            className={`h-[45px] border-b ${isActive(file) ? "bg-[#f2fdff]" : ""} ${
              isActive(file) || isActive(files[i + 1]) ? "border-[#d9e9f1]" : "border-[#f6f6f6]"
            }`}
          >
            <td className="p-0">
              <div className="flex items-center pl-4">
                <CheckBox label={file.name} checked={file.checked} />
                <span className="ml-[15px] pt-0.5"><FileIcon /></span>
                <a href="#file" className="ml-[15px] text-[#424e67]">{file.name}</a>
              </div>
            </td>
            <td className="p-0">4G</td>
            <td className="p-0">2024-04-05 16:30</td>
          </tr>
        ))}
      </tbody>
    </table>
  );
}

function Scrollbar() {
  return (
    <div className="mt-[122px] mb-[49px] flex w-3.5 shrink-0 flex-col items-center">
      <svg viewBox="0 0 10 10" className="size-2.5">
        <path d="M5 1.500 9.500 9h-9Z" fill="#8b8b8b" stroke="#8b8b8b" strokeLinejoin="round" />
      </svg>
      <div className="mt-1.5 w-[9px] flex-1 rounded-full bg-[#8b8b8b]" />
    </div>
  );
}

/* ---------- Desktop ---------- */

function InputMethodBar() {
  return (
    <div className="absolute right-[7px] bottom-0.5 flex h-[29px] w-[172px] items-center bg-white pr-2.5 pl-2 text-[#1577dc] shadow-[0_0_4px_#bbbbbb]">
      <span className="relative flex h-[18px] w-[22px] items-center justify-center">
        <svg viewBox="0 0 22 18" className="absolute inset-0" fill="#1287ef">
          <circle cx="3.500" cy="3.500" r="3.300" />
          <circle cx="18.500" cy="3.500" r="3.300" />
          <path d="M5 1.500h12c2.500 0 3.500 3 3.500 6.500 0 6-2.500 10-6 10h-7c-3.500 0-6-4-6-10C1.500 4.500 2.500 1.500 5 1.500Z" />
        </svg>
        <span className="relative font-['Liberation_Serif',serif] text-xs leading-none font-bold text-white italic">du</span>
      </span>
      <div className="ml-3 flex flex-1 items-center justify-between">
        <span className="text-base">中</span>
        <svg viewBox="0 0 14 14" className="size-3.5">
          <circle cx="3" cy="3" r="2" fill="none" stroke="currentColor" strokeWidth="1.300" />
          <path d="M7.500 9.500a2.300 2.300 0 1 1 4.600.4c0 2-1.100 3.400-3.100 4.100.8-.9 1.200-1.500 1.200-2.200a2.300 2.300 0 0 1-2.700-2.300Z" fill="currentColor" />
        </svg>
        <svg viewBox="0 0 16 16" className="size-4">
          <path d="M8 1C12 1 14.500 5 15.500 10c.7 3-.5 5-2.500 5H3C1 15-.2 13 .5 10 1.500 5 4 1 8 1Z" fill="currentColor" />
          <circle cx="8" cy="6.500" r="1.600" fill="#fff" />
          <path d="M6 15.500V11.500a2 2 0 0 1 4 0V15.500Z" fill="#fff" />
        </svg>
        <svg viewBox="0 0 16 16" className="size-4" fill="none" stroke="currentColor" strokeWidth="1.500">
          <path d="M1 14V8a7 7 0 0 1 14 0v6l-2.500-1L10 15l-2-1.500L6 15l-2.500-2Z" />
          <path d="M5.500 7v2.500M10.500 7v2.500" />
        </svg>
        <svg viewBox="0 0 16 16" className="size-4" fill="none" stroke="currentColor" strokeWidth="1.500">
          <path d="M1.500 1.500h5v5h-5zM9.500 1.500h5v5h-5zM1.500 9.500h5v5h-5zM9.500 9.500h5v5h-5z" />
        </svg>
      </div>
    </div>
  );
}

function TaskbarApp({ label, indicator, children }) {
  return (
    <button className="relative flex h-12 w-11 items-center justify-center" aria-label={label}>
      {children}
      {indicator && <span className={`absolute bottom-1.5 h-[3px] rounded-full ${indicator}`} />}
    </button>
  );
}

function Taskbar() {
  return (
    <footer className="flex h-[49px] items-center border-t border-black bg-linear-to-r from-[#dfe6f1] via-[#e6e7e9] to-[#e3e6f5] pr-5 pl-2.5">
      <TaskbarApp label="Start"><WindowsIcon /></TaskbarApp>
      <TaskbarApp label="Search"><Search className="size-6 text-[#222]" /></TaskbarApp>
      <TaskbarApp label="Edge" indicator="w-4 bg-[#1c6fb8]"><EdgeIcon /></TaskbarApp>
      <TaskbarApp label="Assistant" indicator="w-1.5 bg-[#85888f]"><RobotAppIcon /></TaskbarApp>
      <TaskbarApp label="Explorer" indicator="w-1.5 bg-[#85888f]"><FolderAppIcon /></TaskbarApp>
      <TaskbarApp label="Notepad" indicator="w-1.5 bg-[#85888f]"><NotepadIcon /></TaskbarApp>
      <TaskbarApp label="Device" indicator="w-1.5 bg-[#85888f]"><DeviceAppIcon /></TaskbarApp>

      <div className="ml-auto flex items-center">
        <div className="flex items-center gap-[15px]">
          <ChevronUp className="size-4 text-[#222]" strokeWidth={1.8} />
          <WechatIcon />
          <QQIcon />
          <QQIcon />
          <Mic className="size-4 text-[#1e4f96]" strokeWidth={1.8} />
          <span className="w-4 text-base leading-4 text-[#444]">中</span>
        </div>
        <span className="ml-[22px] flex size-4 items-center justify-center bg-[#1396ea] text-[11px] text-white italic">du</span>
        <span className="ml-[22px]"><NetworkIcon /></span>
        <span className="ml-2"><SpeakerIcon /></span>
        <div className="ml-4 text-right text-xs leading-4 text-[#222]">
          <div>10:20</div>
          <div>2024/4/17</div>
        </div>
        <svg viewBox="0 0 16 16" className="ml-1.5 size-4" fill="#0c4295">
          <path d="M8 .5a5 5 0 0 1 5 5V9.500l2 3V13H1v-.5l2-3V5.500a5 5 0 0 1 5-5ZM6 14h4a2 2 0 0 1-4 0Z" />
        </svg>
      </div>
    </footer>
  );
}

function Watermark() {
  return (
    <div className="pointer-events-none absolute top-9 left-9 flex items-end gap-6 select-none">
      <span className="text-4xl leading-none font-bold text-white/60">天金看科</span>
      <span className="font-[Lato,sans-serif] text-5xl leading-none font-black text-black/6 italic">bilibili</span>
    </div>
  );
}

function App() {
  return (
    <div className="relative flex min-h-screen flex-col bg-[#f8f8f8] font-['Open_Sans','Noto_Sans_CJK_SC',sans-serif]">
      <TitleBar />
      <AddressBar />

      <div className="relative flex flex-1">
        <main className="mb-1 ml-[3px] flex min-w-0 flex-1 flex-col overflow-hidden rounded-lg border border-[#dedede] bg-white">
          <PageHeader />
          <div className="flex flex-1">
            <PageSidebar />
            <div className="flex min-w-0 flex-1">
              <section className="flex min-w-0 flex-1 flex-col pt-[15px]">
                <Toolbar />
                <Breadcrumb />
                <FileTable />
              </section>
              <Scrollbar />
              <div className="w-2.5 bg-[#f9f9f9]" />
            </div>
          </div>
        </main>
        <EdgeSidebar />
        <InputMethodBar />
      </div>

      <Taskbar />
      <Watermark />

      {/* Mouse pointer */}
      <svg viewBox="0 0 12 19" className="pointer-events-none absolute top-[744px] left-[390px] h-[19px] w-3">
        <path d="M.7 1v15l3.500-3.300L6.500 18l2.300-1-2.300-5h4.700Z" fill="#fff" stroke="#111" strokeWidth="1" />
      </svg>
    </div>
  );
}

export default App;
